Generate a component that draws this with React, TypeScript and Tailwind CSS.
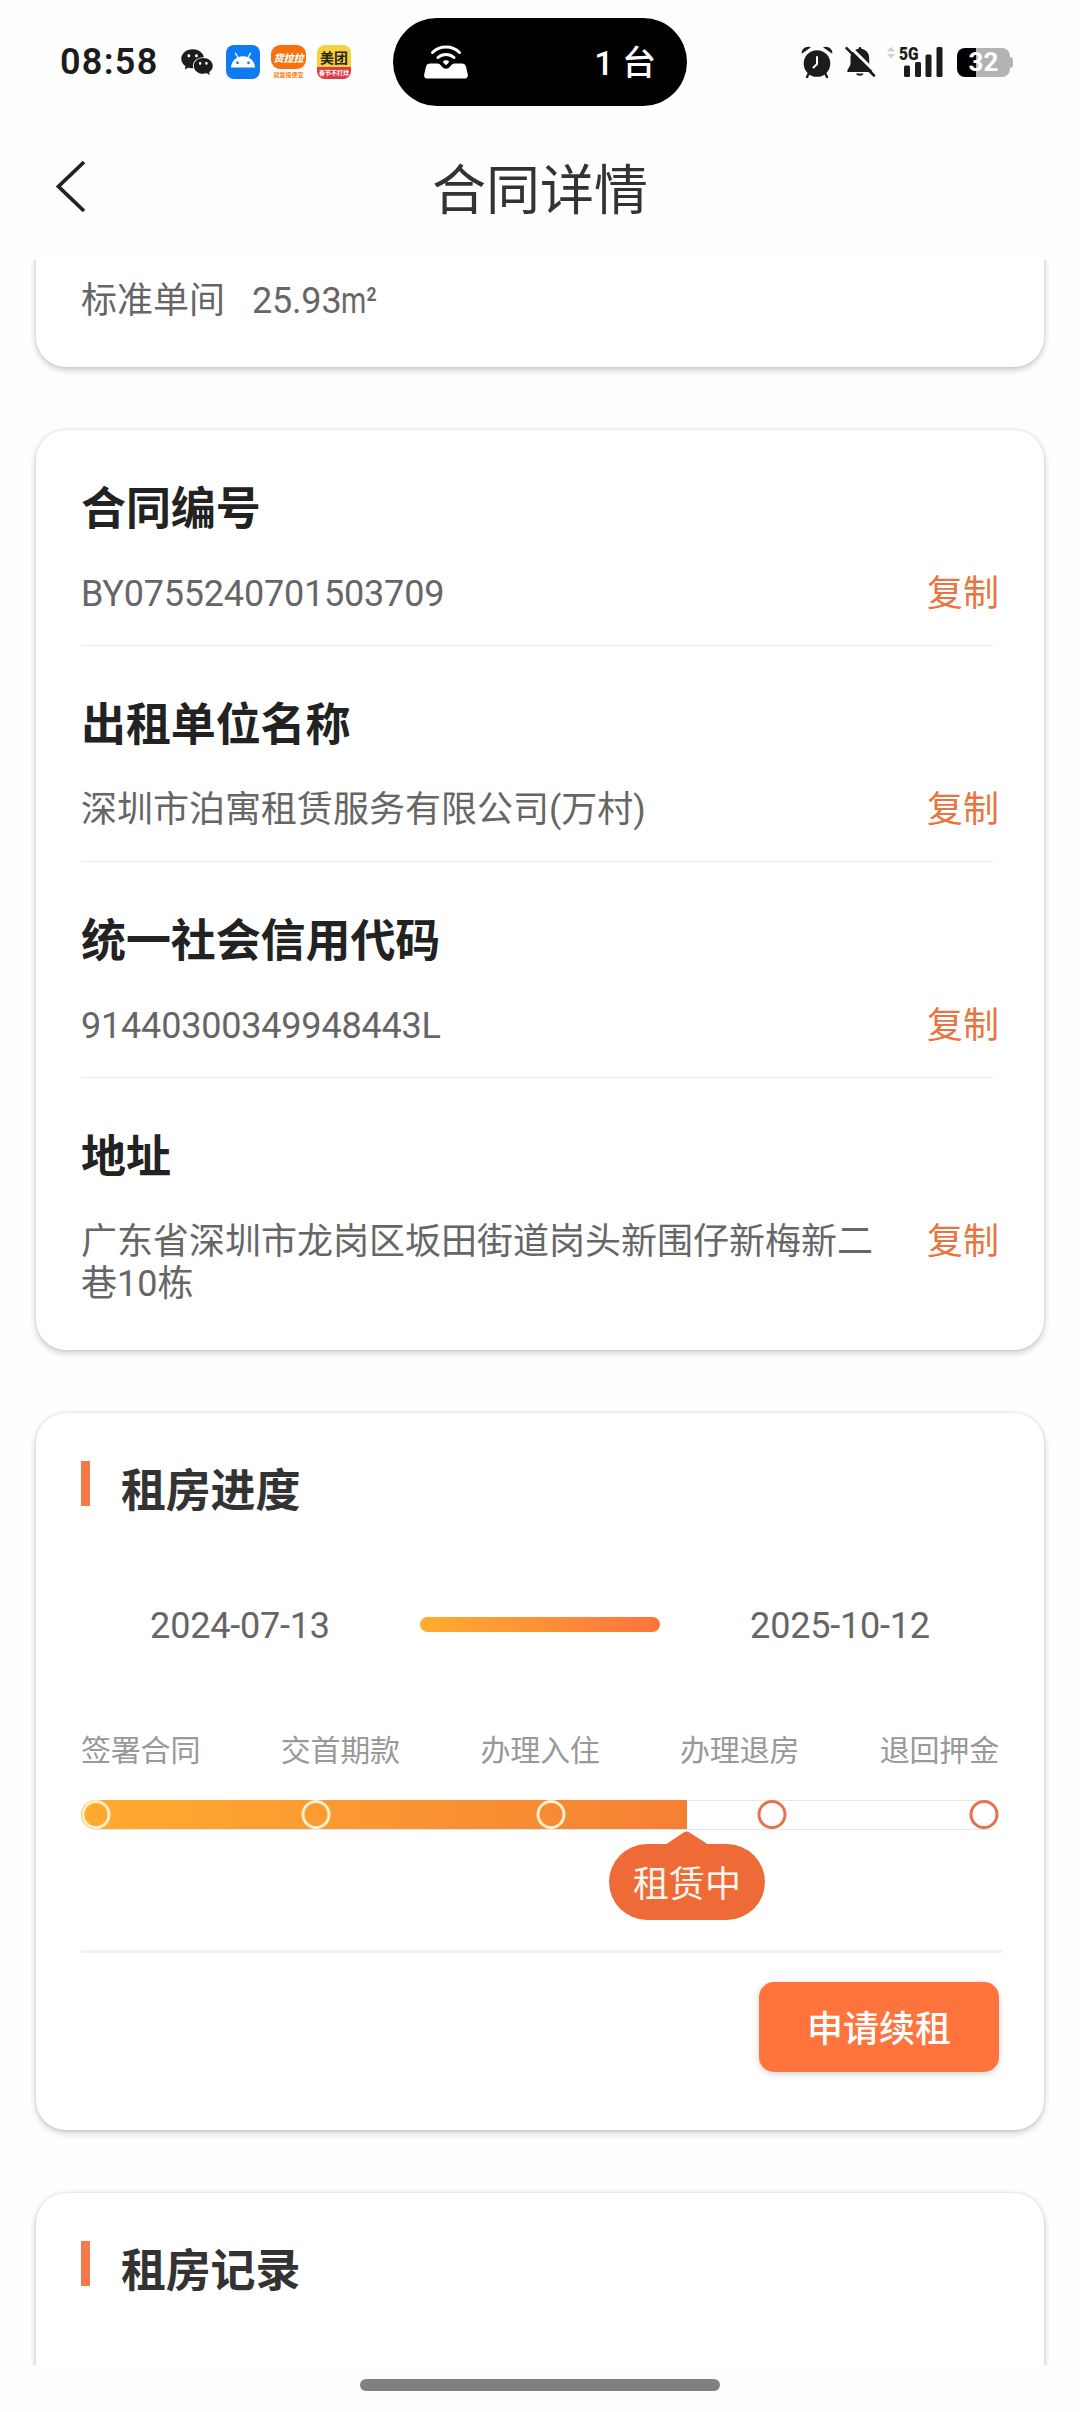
import { AiFillWechat } from "react-icons/ai";

type InfoRow = { label: string; value: string; numeric?: boolean };
type Step = { label: string; center: number; done: boolean };

const INFO_ROWS: InfoRow[] = [
  { label: "合同编号", value: "BY0755240701503709", numeric: true },
  { label: "出租单位名称", value: "深圳市泊寓租赁服务有限公司(万村)" },
  { label: "统一社会信用代码", value: "91440300349948443L", numeric: true },
  { label: "地址", value: "广东省深圳市龙岗区坂田街道岗头新围仔新梅新二巷10栋" },
];

// center: distance of the dot from the left end of the track
const STEPS: Step[] = [
  { label: "签署合同", center: 15, done: true },
  { label: "交首期款", center: 234.5, done: true },
  { label: "办理入住", center: 469.5, done: true },
  { label: "办理退房", center: 690.5, done: false },
  { label: "退回押金", center: 902.5, done: false },
];

const CARD =
  "rounded-[30px] bg-white shadow-[0_3px_7px_rgba(0,0,0,0.2),0_0_3px_rgba(0,0,0,0.12)]";

function AndroidAppIcon() {
  return (
    <svg width="34" height="34" viewBox="0 0 34 34">
      <rect width="34" height="34" rx="8" fill="#0f7bf0" />
      <path d="M5 22.5C5.4 16 10.5 11.3 17 11.3S28.600 16 29 22.500Z" fill="#fff" />
      <path d="M12 12.500 9.500 8.300M22 12.500 24.500 8.300" stroke="#fff" strokeWidth="1.300" strokeLinecap="round" />
      <circle cx="11.500" cy="17.800" r="1.400" fill="#0f7bf0" />
      <circle cx="22.500" cy="17.800" r="1.400" fill="#0f7bf0" />
    </svg>
  );
}

function HotspotIcon() {
  return (
    <svg width="44" height="34" viewBox="0 0 44 34" fill="none">
      <path
        d="M6 18.500H13.500C15 18.500 16 19.300 17 20.500 18.500 22.500 20 23.800 22 23.800S25.500 22.500 27 20.500C28 19.300 29 18.500 30.500 18.500H38C40 18.500 41.200 19.300 42 21.500L43.800 29.500C44.200 32 43 33.500 40.500 33.500H3.500C1 33.500-.2 32 .2 29.500L2 21.500C2.800 19.300 4 18.500 6 18.500Z"
        fill="#fff"
      />
      <path d="M8.500 7.500C16 .2 28 .2 35.500 7.500" stroke="#fff" strokeWidth="3" strokeLinecap="round" />
      <path d="M14 12.500C18.500 8.500 25.500 8.500 30 12.500" stroke="#fff" strokeWidth="3" strokeLinecap="round" />
      <path d="M19 16.500C20.500 14.800 23.500 14.800 25 16.500 25.500 17.200 22.500 20 22 20S18.500 17.200 19 16.500Z" fill="#fff" />
    </svg>
  );
}

function AlarmIcon() {
  return (
    <svg width="32" height="33" viewBox="0 0 32 33" fill="none">
      <circle cx="16" cy="17.500" r="13.300" fill="#1c1c1c" />
      <path d="M16 11V18L12.500 21.500" stroke="#fff" strokeWidth="2" strokeLinecap="round" />
      <path d="M.8 7.800C-.2 3.500 5 -.8 10 1.300Z" fill="#1c1c1c" />
      <path d="M31.200 7.800C32.200 3.500 27 -.8 22 1.300Z" fill="#1c1c1c" />
      <path d="M8 27 6 31M24 27 26 31" stroke="#1c1c1c" strokeWidth="2.400" strokeLinecap="round" />
    </svg>
  );
}

function MutedBellIcon() {
  return (
    <svg width="32" height="32" viewBox="0 0 32 32" fill="none">
      <path
        d="M14.500 2.800C14.500 .5 17.500 .5 17.500 2.800 22.500 3.800 25.200 7.500 25.200 12V17.500C25.200 20 27.500 22 28.200 24.500 28.500 25.500 28 26 27 26H4.500C3.500 26 3 25.500 3.300 24.500 4.200 22 6.500 20 6.500 17.500V12C6.500 7.500 9.500 3.800 14.500 2.800Z"
        fill="#1c1c1c"
      />
      <path d="M12 27.500H19.500C19 30.500 12.500 30.500 12 27.500Z" fill="#1c1c1c" />
      <path d="M4.500-.5 33 27.500" stroke="#fff" strokeWidth="3" />
      <path d="M2.500 2.200 30 29.500" stroke="#1c1c1c" strokeWidth="2.600" strokeLinecap="round" />
    </svg>
  );
}

function SignalIcon() {
  return (
    <svg width="56" height="36" viewBox="0 -4 56 36">
      <path d="M0 5.500 4 .8 8 5.500ZM0 8 8 8 4 12.500Z" fill="#cfcfcf" />
      <text
        x="12"
        y="13.500"
        fontFamily="Roboto, sans-serif"
        fontSize="18"
        fontWeight="900"
        textLength="19.500"
        lengthAdjust="spacingAndGlyphs"
        fill="#1c1c1c"
      >
        5G
      </text>
      <g fill="#1c1c1c">
        <rect x="17" y="19.500" width="6" height="11.500" rx="1.500" />
        <rect x="28" y="16" width="6" height="15" rx="1.500" />
        <rect x="38.500" y="8.500" width="6" height="22.500" rx="1.500" />
        <rect x="49.500" y="1" width="6" height="30" rx="1.500" />
      </g>
    </svg>
  );
}

function StatusBar() {
  return (
    <div className="flex h-[124px] items-start pl-[60px]">
      <div className="flex h-[124px] w-[333px] items-center">
        <span className="w-[119px] text-[36px] font-semibold tracking-[1.3px] text-[#1c1c1c]">08:58</span>
        <AiFillWechat className="mr-[11px] h-[36px] w-[36px] text-[#1c1c1c]" />
        <AndroidAppIcon />
        <div className="ml-[11px] flex h-[34px] w-[35px] flex-col items-center">
          <div className="flex h-[24px] w-full items-center justify-center rounded-[9px] bg-[#f8700c] pt-[3px] text-[10px] leading-none font-black text-white italic">
            货拉拉
          </div>
          <span className="mt-px text-[6px] leading-[9px] font-bold whitespace-nowrap text-[#f8841c]">就是很便宜</span>
        </div>
        <div className="ml-[11px] flex h-[34px] w-[34px] flex-col overflow-hidden rounded-[8px] bg-[#f7d13c]">
          <span className="flex h-[22px] items-center justify-center pt-[4px] text-[14px] leading-none font-bold text-[#2a2415]">
            美团
          </span>
          <span className="flex h-[12px] items-center justify-center bg-[#de3b48] text-[6px] leading-none font-bold text-white">
            春节不打烊
          </span>
        </div>
      </div>
      <div className="mt-[18px] flex h-[88px] w-[294px] items-center justify-between rounded-full bg-black pr-[31px] pl-[31px]">
        <HotspotIcon />
        <span className="pt-[2px] text-[34px] leading-none font-medium whitespace-pre text-white">1 台</span>
      </div>
      <div className="ml-[114px] flex h-[124px] items-center">
        <AlarmIcon />
        <div className="ml-[11px]">
          <MutedBellIcon />
        </div>
        <div className="ml-[11px] -mt-[4px]">
          <SignalIcon />
        </div>
        <div className="ml-[14px] flex h-[29px] w-[53px] items-center justify-center rounded-[8px] bg-[linear-gradient(90deg,#000_35%,#b3b3b3_35%)] text-[26px] leading-none font-bold text-white">
          32
        </div>
        <div className="h-[11px] w-[3px] rounded-r-[3px] bg-[#b3b3b3]" />
      </div>
    </div>
  );
}

function Header() {
  return (
    <header className="grid h-[136px] grid-cols-[200px_1fr_200px] items-center">
      <svg className="mb-[10px] ml-[54px]" width="34" height="56" viewBox="0 0 34 56" fill="none">
        <path d="M30 3 4.500 27.500 30 52" stroke="#222" strokeWidth="3.800" />
      </svg>
      <h1 className="text-center text-[54px] leading-none font-normal text-[#333]">合同详情</h1>
    </header>
  );
}

function InfoItem({ label, value, numeric, last }: InfoRow & { last: boolean }) {
  return (
    <div className={last ? "" : "h-[216px]"}>
      <h2 className="pt-[56px] text-[45px] leading-[48px] font-bold tracking-[-0.1px] text-[#222]">{label}</h2>
      <div className="mt-[39px] flex items-start justify-between text-[36px] leading-[42px]">
        <p className={numeric ? "w-[800px] tracking-[-0.2px] text-[#666]" : "w-[800px] text-[#666]"}>{value}</p>
        <button type="button" className="text-[#e8743f]">
          复制
        </button>
      </div>
      {!last && <div className="mt-[30px] mr-[6px] h-px bg-[#ececec]" />}
    </div>
  );
}

function SectionTitle({ children }: { children: string }) {
  return (
    <div className="flex items-start pt-[48px]">
      <div className="h-[45px] w-[9px] bg-[#f47a4a]" />
      <h2 className="mt-[8px] ml-[31px] text-[45px] leading-[46px] font-bold tracking-[-0.2px] text-[#333]">
        {children}
      </h2>
    </div>
  );
}

function ProgressTrack() {
  return (
    <div className="relative mt-[28px] h-[30px]">
      <div className="mr-[8px] h-[30px] rounded-l-[15px] border-y border-[#e6e6e6]" />
      <div className="absolute top-0 left-0 h-[29px] w-[606px] rounded-l-[15px] bg-linear-to-r from-[#ffab2e] to-[#f58034]" />
      {STEPS.map((step) => (
        <div
          key={step.label}
          className={
            step.done
              ? "absolute top-0 h-[29px] w-[29px] -translate-x-1/2 rounded-full border-3 border-[#fff0cc]"
              : "absolute top-0 h-[29px] w-[29px] -translate-x-1/2 rounded-full border-3 border-[#e2734c] bg-white"
          }
          style={{ left: step.center }}
        />
      ))}
      <div className="absolute top-[31px] left-[528px] flex w-[156px] flex-col items-center">
        <svg className="-mb-px" width="44" height="14" viewBox="0 0 44 14">
          <path d="M0 14 19 1.200Q21.500-.4 24 1.200L44 14Z" fill="#ee6b38" />
        </svg>
        <div className="flex h-[76px] w-full items-center justify-center rounded-full bg-[#ee6b38] pt-[6px] text-[36px] text-[#fff6ee]">
          租赁中
        </div>
      </div>
    </div>
  );
}

export default function App() {
  return (
    <div className="flex h-[2412px] w-[1080px] flex-col overflow-hidden bg-[#fefefe] font-[Roboto,'Noto_Sans_CJK_SC',sans-serif]">
      <StatusBar />
      <Header />
      <main className="flex h-[2105px] flex-col gap-[63px] overflow-hidden px-9">
        <section className={`${CARD} -mt-[64px] h-[171px] shrink-0 px-[45px] pt-[84px]`}>
          <p className="flex text-[36px] leading-[42px] text-[#666]">
            <span className="mr-[27px]">标准单间</span>
            <span className="tracking-[-0.2px]">25.93</span>
            <span className="origin-left scale-x-80">m²</span>
          </p>
        </section>

        <section className={`${CARD} h-[920px] shrink-0 px-[45px]`}>
          {INFO_ROWS.map((row, i) => (
            <InfoItem key={row.label} {...row} last={i === INFO_ROWS.length - 1} />
          ))}
        </section>

        <section className={`${CARD} h-[717px] shrink-0 px-[45px]`}>
          <SectionTitle>租房进度</SectionTitle>
          <div className="mt-[90px] grid grid-cols-[318px_1fr_318px] items-center text-center text-[36px] leading-[42px] tracking-[-0.2px] text-[#666]">
            <span>2024-07-13</span>
            <div className="mx-[21px] mb-[3px] h-[15px] rounded-full bg-linear-to-r from-[#ffac2f] to-[#ff733c]" />
            <span>2025-10-12</span>
          </div>
          <div className="mt-[83px] flex justify-between text-[30px] leading-[42px] tracking-[-0.2px] text-[#999]">
            {STEPS.map((step) => (
              <span key={step.label}>{step.label}</span>
            ))}
          </div>
          <ProgressTrack />
          <div className="mt-[120px] -mr-[3px] h-[3px] bg-[#f0f1f1]" />
          <div className="mt-[29px] flex justify-end">
            <button
              type="button"
              className="h-[90px] w-[240px] rounded-[15px] bg-[#ff733c] pt-[5px] text-[36px] font-medium text-white shadow-[0_2px_6px_rgba(0,0,0,0.18)]"
            >
              申请续租
            </button>
          </div>
        </section>

        <section className={`${CARD} h-[400px] shrink-0 px-[45px]`}>
          <SectionTitle>租房记录</SectionTitle>
        </section>
      </main>
      <div className="mt-[14px] h-[12px] w-[360px] self-center rounded-full bg-[#808080]" />
    </div>
  );
}
